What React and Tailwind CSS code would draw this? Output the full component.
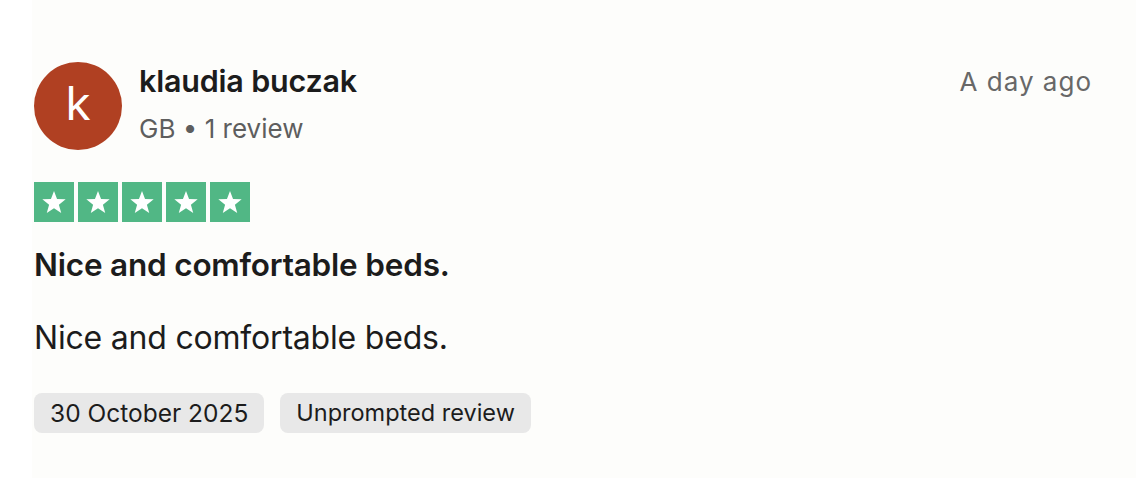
import React from 'react';

const Star = () => (
  <div className="w-10 h-10 bg-[#51b785] flex items-center justify-center">
    <svg viewBox="0 0 24 24" className="w-7 h-7" fill="white">
      <path d="M12 2.5l2.6 6.9 7.4.3-5.8 4.6 2 7.2L12 17.4l-6.2 4.1 2-7.2L2 9.7l7.4-.3z" />
    </svg>
  </div>
);

export default function App() {
  return (
    <div className="min-h-screen bg-white font-['Inter',sans-serif] text-[#1c1c1c]">
      <div className="ml-[32px] min-h-[478px] bg-[#fdfdfb] pl-[2px] pr-[44px] pt-[62px]">
        {/* Header */}
        <div className="flex items-start justify-between">
          <div className="flex items-start gap-[17px]">
            <div className="w-[88px] h-[88px] rounded-full bg-[#b04022] flex items-center justify-center text-white text-[46px] leading-none pb-[6px]">
              k
            </div>
            <div className="flex flex-col">
              <div className="-mt-[1px] text-[30.5px] font-semibold leading-[40px] tracking-[-0.2px]">klaudia buczak</div>
              <div className="mt-[10px] text-[26px] leading-[36px] text-[#5e5e5e]">GB • 1 review</div>
            </div>
          </div>
          <div className="text-[26px] leading-[40px] tracking-[1px] text-[#686868]">A day ago</div>
        </div>

        {/* Stars */}
        <div className="flex gap-[4px] mt-[32px]">
          <Star />
          <Star />
          <Star />
          <Star />
          <Star />
        </div>

        {/* Title & body */}
        <h2 className="mt-[23px] text-[31.5px] font-semibold leading-[40px] tracking-[-0.2px]">Nice and comfortable beds.</h2>
        <p className="mt-[33px] text-[32px] leading-[40px] tracking-[-0.2px]">Nice and comfortable beds.</p>

        {/* Tags */}
        <div className="flex gap-[16px] mt-[35px]">
          <span className="h-10 px-4 flex items-center rounded-lg bg-[#e8e8e8] text-[24.5px]">30 October 2025</span>
          <span className="h-10 px-4 flex items-center rounded-lg bg-[#e8e8e8] text-[23.5px]">Unprompted review</span>
        </div>
      </div>
    </div>
  );
}
